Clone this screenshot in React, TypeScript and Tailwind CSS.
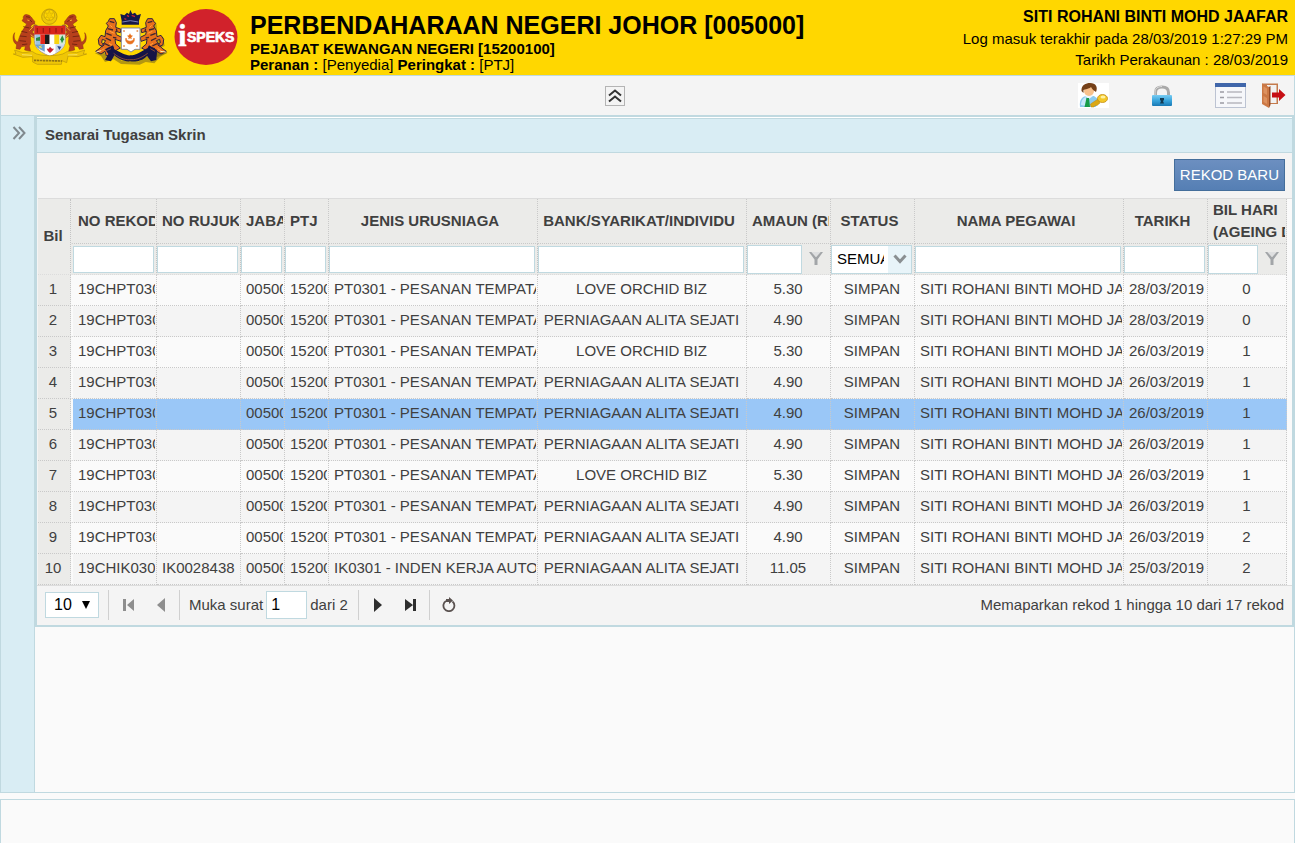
import React from "react";

const rows = [
  ["19CHPT030", "", "PT0301 - PESANAN TEMPATAN", "LOVE ORCHID BIZ", "5.30", "28/03/2019", "0"],
  ["19CHPT030", "", "PT0301 - PESANAN TEMPATAN", "PERNIAGAAN ALITA SEJATI", "4.90", "28/03/2019", "0"],
  ["19CHPT030", "", "PT0301 - PESANAN TEMPATAN", "LOVE ORCHID BIZ", "5.30", "26/03/2019", "1"],
  ["19CHPT030", "", "PT0301 - PESANAN TEMPATAN", "PERNIAGAAN ALITA SEJATI", "4.90", "26/03/2019", "1"],
  ["19CHPT030", "", "PT0301 - PESANAN TEMPATAN", "PERNIAGAAN ALITA SEJATI", "4.90", "26/03/2019", "1"],
  ["19CHPT030", "", "PT0301 - PESANAN TEMPATAN", "PERNIAGAAN ALITA SEJATI", "4.90", "26/03/2019", "1"],
  ["19CHPT030", "", "PT0301 - PESANAN TEMPATAN", "LOVE ORCHID BIZ", "5.30", "26/03/2019", "1"],
  ["19CHPT030", "", "PT0301 - PESANAN TEMPATAN", "PERNIAGAAN ALITA SEJATI", "4.90", "26/03/2019", "1"],
  ["19CHPT030", "", "PT0301 - PESANAN TEMPATAN", "PERNIAGAAN ALITA SEJATI", "4.90", "26/03/2019", "2"],
  ["19CHIK030", "IK0028438", "IK0301 - INDEN KERJA AUTO", "PERNIAGAAN ALITA SEJATI", "11.05", "25/03/2019", "2"],
];

function MalaysiaCrest() {
  const tiger = (
    <g>
      <path d="M106 64 C96 54 96 46 84 44 C76 42 70 48 72 56 L68 62 L76 68 L82 72 C78 82 70 88 66 98 C60 110 58 118 56 126 C46 124 42 112 46 98 C38 108 40 128 52 134 L50 146 L62 148 L66 140 L78 138 L76 150 L94 154 L90 138 C98 128 92 118 94 108 L108 116 L112 108 L98 96 L108 88 L114 76 L106 74 L96 84 C92 80 96 72 106 72 Z" fill="#b8401c" stroke="#8c3014" strokeWidth="1.5" />
      <path d="M80 50 L92 52 M72 80 L90 84 M66 94 L84 98 M62 108 L82 110 M60 122 L80 124 M68 134 L84 132 M92 60 L98 66" stroke="#6c2010" strokeWidth="2.5" fill="none" />
      <path d="M90 92 L102 80 M94 104 L104 112 M84 60 L90 62" stroke="#f0a830" strokeWidth="3" fill="none" />
    </g>
  );
  return (
    <svg viewBox="38 24 228 174" className="h-[58px] w-[76px]" role="img" aria-label="Jata Negara">
      <circle cx="150" cy="50" r="23" fill="#ecc808" stroke="#b8940c" strokeWidth="2.5" />
      <circle cx="150" cy="45" r="16" fill="#ffd700" stroke="#b8940c" strokeWidth="2" />
      <path d="M150 31 L153 40 L162 38 L156 46 L162 53 L153 52 L150 60 L147 52 L138 53 L144 46 L138 38 L147 40 Z" fill="#f4cc00" stroke="#b8940c" strokeWidth="1" />
      <g>{tiger}</g>
      <g transform="translate(302 0) scale(-1 1)">{tiger}</g>
      <path d="M105 78 H198 V122 C198 146 174 160 152 168 C128 160 105 146 105 122 Z" fill="#eef0f4" stroke="#98806c" strokeWidth="2" />
      <path d="M105 78 H198 V104 H105 Z" fill="#d8261c" />
      <path d="M114 84 V98 M132 84 V98 M151 84 V98 M170 84 V98 M188 84 V98" stroke="#a01814" strokeWidth="4" />
      <path d="M108 104 H122 V132 H108 Z" fill="#9cc4e4" />
      <path d="M110 114 L122 110 V122 H110 Z" fill="#2c8446" />
      <path d="M123 104 H137 V132 H123 Z" fill="#e0281c" />
      <path d="M137 104 H151 V132 H137 Z" fill="#1a1a1a" />
      <path d="M151 104 H165 V132 H151 Z" fill="#fff" />
      <path d="M165 104 H180 V132 H165 Z" fill="#f8d410" />
      <path d="M181 104 H197 V132 H181 Z" fill="#d4e8d4" />
      <path d="M189 106 L194 118 L188 130 L183 118 Z" fill="#24903c" />
      <path d="M108 133 H136 V155 C122 149 110 143 108 133 Z" fill="#6aa0d4" />
      <path d="M137 133 H168 V160 L152 167 L137 160 Z" fill="#fff" />
      <path d="M169 133 H196 C192 146 180 152 169 158 Z" fill="#cad8e8" />
      <path d="M118 138 L128 144 M120 146 L126 136" stroke="#f0e058" strokeWidth="3" />
      <path d="M152 140 L158 146 L164 146 L158 154 L152 159 L146 154 L142 146 L148 146 Z" fill="#c62030" />
      <path d="M174 138 L186 140 L180 150 Z" fill="#28458a" />
      <path d="M46 150 L70 158 C92 158 96 150 104 158 C120 170 182 170 198 158 C208 150 214 158 232 158 L256 150 L252 162 L262 162 L236 170 L206 168 L202 188 L188 182 L186 193 L114 193 L100 186 L100 170 L70 172 L42 162 L50 162 Z" fill="#efc606" stroke="#b8940c" strokeWidth="2" />
      <path d="M68 164 L98 166 M206 165 L234 164" stroke="#fff08a" strokeWidth="2" />
      <path d="M104 181 L188 183" stroke="#927410" strokeWidth="5" strokeDasharray="7 2" />
    </svg>
  );
}

function JohorCrest() {
  const beast = (
    <g>
      <path d="M366 86 L350 80 L352 66 L346 54 L332 54 L328 62 L322 68 L328 76 L320 90 L318 108 L306 104 L298 116 L300 132 L310 138 L316 132 L308 126 L310 116 L320 120 L304 142 L290 152 L306 160 L318 152 L322 166 L338 160 L336 146 L350 150 L364 142 L350 130 L348 116 L366 122 L368 110 L352 102 L350 92 L364 96 Z" fill="#e8701c" stroke="#302240" strokeWidth="3" />
      <path d="M332 62 L346 66 M326 84 L342 88 M322 98 L338 104 M320 112 L336 120 M316 128 L332 136 M324 144 L344 140 M354 92 L352 84 M342 110 L352 112" stroke="#3c2630" strokeWidth="4" />
      <path d="M334 74 L340 80 M332 92 L346 98 M330 128 L340 134 M306 150 L316 144" stroke="#ffa040" strokeWidth="3" />
    </g>
  );
  return (
    <svg viewBox="282 22 228 174" className="h-[58px] w-[76px]" role="img" aria-label="Jata Johor">
      <path d="M288 158 L312 148 L324 172 L350 162 L368 180 L420 182 L442 166 L462 180 L474 154 L506 156 L484 168 L466 188 L440 184 L422 192 L366 190 L344 176 L318 184 L306 166 Z" fill="#806c1c" opacity=".6" />
      <g transform="translate(3 4)" opacity=".35">
        <path d="M462 86 L440 80 L440 54 L460 54 L470 68 L472 108 L490 106 L494 132 L482 138 L502 152 L470 166 L430 142 Z" fill="#504010" />
      </g>
      <g>{beast}</g>
      <g transform="translate(792 0) scale(-1 1)">{beast}</g>
      <path d="M364 40 L376 44 L384 36 L390 40 L394 28 L400 40 L408 36 L414 44 L426 40 L420 60 V72 H368 V60 Z" fill="#151848" />
      <path d="M384 44 L390 48 M398 44 L408 48 M376 54 L382 56" stroke="#c22638" strokeWidth="4" />
      <path d="M370 64 Q394 56 418 64" stroke="#8c95cc" strokeWidth="2.5" fill="none" />
      <path d="M367 82 H423 V146 H408 L396 154 L384 146 H367 Z" fill="#fff" stroke="#70769a" strokeWidth="2.5" />
      <path d="M381 112 A13 13 0 1 0 405 112 A12 10 0 1 1 381 112 Z" fill="#e8701c" stroke="#e8701c" strokeWidth="2" />
      <path d="M393 98 L396 104 L402 105 L397 110 L398 116 L393 113 L388 116 L389 110 L384 105 L390 104 Z" fill="#e8701c" />
      <g fill="#e89a60">
        <circle cx="375" cy="91" r="3" /><circle cx="415" cy="91" r="3" /><circle cx="375" cy="136" r="3" /><circle cx="414" cy="136" r="3" />
      </g>
      <path d="M318 146 L342 134 L346 146 C366 156 382 166 395 164 C410 164 428 152 446 142 L450 134 L474 148 L472 178 L456 182 L444 166 C428 182 410 184 394 182 C374 184 358 174 346 164 L336 182 L318 178 L328 160 Z" fill="#151446" />
      <path d="M344 158 C366 176 382 178 396 177 C416 178 432 168 446 158 M322 150 L336 144 M454 144 L468 152" fill="none" stroke="#b86030" strokeWidth="2" />
      <path d="M292 154 L306 150 M484 152 L500 154" stroke="#fff0b0" strokeWidth="3" />
    </svg>
  );
}

function SpeksLogo() {
  return (
    <svg viewBox="0 0 64 58" className="h-[58px] w-16" role="img" aria-label="iSPEKS">
      <ellipse cx="32" cy="29" rx="31.5" ry="28" fill="#d1222b" />
      <text x="4" y="38" fill="#fff" stroke="#fff" strokeWidth=".4" fontFamily="Liberation Serif, serif" fontSize="31" fontWeight="bold">i</text>
      <text x="13" y="34" fill="#fff" stroke="#fff" strokeWidth=".7" fontFamily="Liberation Sans, sans-serif" fontSize="14" fontWeight="bold">SPEKS</text>
    </svg>
  );
}

function UserKeyIcon() {
  return (
    <svg viewBox="0 0 31 25" className="h-[25px] w-[31px]" aria-hidden="true">
      <rect width="31" height="25" fill="#fff" />
      <path d="M2 24 C1 17 4 13 9 13 L16 13 L20 16 L18 24 Z" fill="#8ccbee" />
      <path d="M3 22 C3 18 5 15 8 14 L8 23 Z" fill="#c8e8fa" />
      <path d="M7 13 L11 16 L15 13 L13 11 H9 Z" fill="#eef7fd" />
      <path d="M8.500 15 L11 15 L12 24 L6.500 24 Z" fill="#169c48" />
      <circle cx="11" cy="8" r="5" fill="#f8c18c" />
      <path d="M3.500 8 C3 2 8 0 12 0 C18 0 20 4 18 9 C16 8 14 6 13 4 C11 6 7 6 5.500 7 L5.500 10 Z" fill="#754018" />
      <path d="M20 16 L12.500 21 L13 24 L16 24 L17 22.500 L19 22.500 L22 20 Z" fill="#dca814" stroke="#b98610" strokeWidth=".5" />
      <ellipse cx="24.500" cy="15.500" rx="5" ry="4" fill="#f4c829" stroke="#c48d10" strokeWidth=".8" />
      <ellipse cx="25" cy="14" rx="2.500" ry="1.500" fill="#fff2a2" />
    </svg>
  );
}

function LockIcon() {
  return (
    <svg viewBox="0 0 22 22" className="h-[22px] w-[22px]" aria-hidden="true">
      <defs>
        <linearGradient id="lock-body" x1="0" y1="0" x2="0" y2="1">
          <stop offset="0" stopColor="#79ccf2" /><stop offset=".5" stopColor="#39a5dc" /><stop offset="1" stopColor="#1878b4" />
        </linearGradient>
      </defs>
      <path d="M4.500 11 V7.500 C4.500 3.500 7 2 11 2 C15 2 17.500 3.500 17.500 7.500 V11" fill="none" stroke="#a9a9a9" strokeWidth="3" />
      <path d="M4 10 V7 C4 3.500 7 1.500 11 1.500" fill="none" stroke="#dedede" strokeWidth="1" />
      <rect x="1" y="10" width="20" height="11" rx="1" fill="url(#lock-body)" />
      <path d="M9 13 H13 V15 L12 16 L13 18.500 H9 L10 16 L9 15 Z" fill="#123a52" />
    </svg>
  );
}

function ListIcon() {
  return (
    <svg viewBox="0 0 31 25" className="h-[25px] w-[31px]" aria-hidden="true">
      <rect x=".5" y=".5" width="30" height="24" fill="#f6f7fa" stroke="#bcc3d2" />
      <rect width="31" height="4" fill="#4066aa" />
      <path d="M5 9 H9 M5 14.500 H9 M5 20 H9" stroke="#9c9ca4" strokeWidth="1.500" />
      <path d="M12 9 H27 M12 14.500 H27 M12 20 H27" stroke="#b8b8bf" strokeWidth="1.500" />
    </svg>
  );
}

function ExitIcon() {
  return (
    <svg viewBox="0 0 25 25" className="h-[25px] w-[25px]" aria-hidden="true">
      <path d="M1 .5 H17 V21 H1 Z" fill="#c47a4c" />
      <path d="M6 2 H15.500 V20 H6 Z" fill="#f2f2f2" />
      <path d="M1 .5 L8 4 V25 L1 21 Z" fill="#cc7844" />
      <path d="M2.500 3.500 L6 5.500 V12 L2.500 10 Z M2.500 13 L6 15 V21 L2.500 19 Z" fill="#dd9260" />
      <path d="M8 4 L9.500 3 V22 L8 25 Z" fill="#934a25" />
      <path d="M11 9.500 H18 V6 L24.500 12 L18 18 V14.500 H11 Z" fill="#c60e14" />
    </svg>
  );
}

function Funnel() {
  return (
    <svg viewBox="0 0 16 16" className="h-4 w-4" aria-hidden="true">
      <path d="M1 1 H3.500 L8 6 L12.500 1 H15 L9.500 8.500 V14 L6.500 14 V8.500 Z" fill="#a2a5a8" />
      <path d="M3.500 1 H12.500 L8 6 Z" fill="#dedfe0" />
    </svg>
  );
}

const line = "border-r border-b border-dotted border-[#c9c9c9]";

function HeadCell({ children, first, left }: { children: React.ReactNode; first?: boolean; left?: boolean }) {
  return (
    <th scope="col" className={line + " p-0 pr-px font-bold" + (first ? " border-l-2 border-l-[#ebebe9] [border-left-style:solid]" : "")}>
      <div className={"overflow-hidden pl-[5px] leading-[22px] whitespace-nowrap " + (left ? "pr-0 text-left" : "pr-[10px] text-center")}>{children}</div>
    </th>
  );
}

function Cell({ children, first }: { children: React.ReactNode; first?: boolean }) {
  return (
    <td className={line + " p-0 pr-px pb-[2px]" + (first ? " border-l-2 border-l-[#fafafa] [border-left-style:solid]" : "")}>
      <div className="overflow-hidden px-[5px] text-center whitespace-nowrap">{children}</div>
    </td>
  );
}

function FilterInput({ label }: { label: string }) {
  return <input type="text" aria-label={label} className="block h-[27px] w-full border border-[#c0d9e0] bg-white px-1 outline-none" />;
}

function NumberFilter({ label }: { label: string }) {
  return (
    <div className="flex items-center">
      <input type="text" aria-label={label} className="block h-[29px] min-w-0 flex-1 border border-[#c0d9e0] bg-white px-1 outline-none" />
      <button type="button" aria-label={"Tapis " + label} className="flex w-7 shrink-0 justify-center">
        <Funnel />
      </button>
    </div>
  );
}

export default function App() {
  const fh = "border-r border-dotted border-[#c4c4c4] border-b border-b-[#dcdcdc] p-0 font-normal";
  return (
    <div className="flex min-h-screen flex-col bg-[#fafafa] font-['Liberation_Sans',Arial,sans-serif] text-[15px] leading-5 text-[#404040]">
      <header className="flex h-[75px] justify-between bg-[#ffd700] text-black">
        <div className="flex">
          <div className="flex items-start gap-[5px] pt-2 pl-3">
            <MalaysiaCrest />
            <JohorCrest />
            <SpeksLogo />
          </div>
          <div className="pt-3 pl-3 leading-4">
            <h1 className="mb-[3px] text-[25px] leading-[26px] font-bold">PERBENDAHARAAN NEGERI JOHOR [005000]</h1>
            <p className="font-bold">PEJABAT KEWANGAN NEGERI [15200100]</p>
            <p><b>Peranan :</b> [Penyedia] <b>Peringkat :</b> [PTJ]</p>
          </div>
        </div>
        <div className="pt-[6px] pr-[7px] text-right leading-[21px]">
          <p className="text-base leading-[22px] font-bold">SITI ROHANI BINTI MOHD JAAFAR</p>
          <p>Log masuk terakhir pada 28/03/2019 1:27:29 PM</p>
          <p>Tarikh Perakaunan : 28/03/2019</p>
        </div>
      </header>

      <nav className="grid h-10 grid-cols-[1fr_auto_1fr] items-center border-x border-t border-[#c0d9e0] bg-[#f4f4f4] pr-2">
        <span />
        <button type="button" aria-label="Tutup pengepala" className="mr-[58px] flex h-5 w-5 items-center justify-center border border-[#b4b4b4]">
          <svg viewBox="0 0 16 16" className="h-4 w-4" aria-hidden="true">
            <path d="M2 7.500 L8 2.500 L14 7.500 M2 13.500 L8 8.500 L14 13.500" fill="none" stroke="#333" strokeWidth="2" />
          </svg>
        </button>
        <div className="flex items-center justify-end">
          <button type="button" aria-label="Tukar kata laluan" className="mr-[42px]"><UserKeyIcon /></button>
          <button type="button" aria-label="Kunci" className="mr-[42px]"><LockIcon /></button>
          <button type="button" aria-label="Senarai" className="mr-[15px]"><ListIcon /></button>
          <button type="button" aria-label="Log keluar"><ExitIcon /></button>
        </div>
      </nav>

      <div className="flex flex-1 border border-[#c0d9e0] bg-[#fafafa]">
        <aside className="w-[34px] shrink-0 border-r border-[#c0d9e0] bg-[#d9edf4] pt-[9px] pl-[11px]">
          <button type="button" aria-label="Buka menu" className="block">
            <svg viewBox="0 0 14 16" className="h-4 w-[14px]" aria-hidden="true">
              <path d="M1.500 2 L7 8 L1.500 14 M7 2 L12.500 8 L7 14" fill="none" stroke="#80898e" strokeWidth="2" />
            </svg>
          </button>
        </aside>

        <main className="min-w-0 flex-1">
          <section className="border-2 border-t border-[#c0d9e0] bg-[#f4f4f4]">
            <h2 className="border-t border-white bg-[#d9edf4] font-bold">
              <span className="block h-[35px] border-y border-[#c0d9e0] px-2 leading-[31px]">Senarai Tugasan Skrin</span>
            </h2>
            <div className="flex h-[45px] items-start justify-end pt-[6px] pr-[7px]">
              <button type="button" className="h-8 border border-[#446e9b] bg-linear-to-b from-[#6c8fc0] to-[#557fb4] px-[5px] text-white">REKOD BARU</button>
            </div>

            <div className="ml-px border-t border-[#dcdcdc] bg-[#fafafa] pr-[5px]">
              <table className="w-full table-fixed border-separate border-spacing-0">
                <colgroup>
                  <col className="w-[33px]" />
                  <col className="w-[86px]" />
                  <col className="w-[84px]" />
                  <col className="w-[44px]" />
                  <col className="w-[44px]" />
                  <col />
                  <col />
                  <col className="w-[84px]" />
                  <col className="w-[84px]" />
                  <col />
                  <col className="w-[84px]" />
                  <col className="w-[79px]" />
                </colgroup>
                <thead className="bg-[#ebebe9]">
                  <tr className="h-[45px]">
                    <th rowSpan={2} scope="col" className="border-r border-b border-dotted border-[#c4c4c4] border-b-[#dcdcdc] p-0 pr-[2px] pb-[2px] text-center">Bil</th>
                    <HeadCell first>NO REKOD</HeadCell>
                    <HeadCell>NO RUJUKAN</HeadCell>
                    <HeadCell>JABATAN</HeadCell>
                    <HeadCell left>PTJ</HeadCell>
                    <HeadCell>JENIS URUSNIAGA</HeadCell>
                    <HeadCell>BANK/SYARIKAT/INDIVIDU</HeadCell>
                    <HeadCell>AMAUN (RM)</HeadCell>
                    <HeadCell>STATUS</HeadCell>
                    <HeadCell>NAMA PEGAWAI</HeadCell>
                    <HeadCell>TARIKH</HeadCell>
                    <HeadCell>BIL HARI<br />(AGEING DAY)</HeadCell>
                  </tr>
                  <tr className="h-[31px]">
                    <td className={fh + " border-l-2 border-l-[#ebebe9] pr-[2px]"}><FilterInput label="No rekod" /></td>
                    <td className={fh + " pr-[2px]"}><FilterInput label="No rujukan" /></td>
                    <td className={fh + " pr-[2px]"}><FilterInput label="Jabatan" /></td>
                    <td className={fh + " pr-[2px]"}><FilterInput label="PTJ" /></td>
                    <td className={fh + " pr-[2px]"}><FilterInput label="Jenis urusniaga" /></td>
                    <td className={fh + " pr-[2px]"}><FilterInput label="Bank, syarikat atau individu" /></td>
                    <td className={fh}><NumberFilter label="Amaun" /></td>
                    <td className={fh + " pr-[2px]"}>
                      <div className="relative">
                        <select aria-label="Status" className="block h-[29px] w-full appearance-none overflow-hidden border border-[#c0d9e0] bg-white pr-[27px] pl-[5px] text-black outline-none">
                          <option>SEMUA</option>
                        </select>
                        <span className="pointer-events-none absolute inset-y-px right-px flex w-[23px] items-center justify-center bg-[#e8f4f9]">
                          <svg viewBox="0 0 14 10" className="h-[10px] w-[14px]" aria-hidden="true">
                            <path d="M1.500 1.500 L7 7.500 L12.500 1.500" fill="none" stroke="#8a8f92" strokeWidth="3" />
                          </svg>
                        </span>
                      </div>
                    </td>
                    <td className={fh + " pr-[2px]"}><FilterInput label="Nama pegawai" /></td>
                    <td className={fh + " pr-[2px]"}><FilterInput label="Tarikh" /></td>
                    <td className={fh}><NumberFilter label="Bil hari" /></td>
                  </tr>
                </thead>
                <tbody>
                  {rows.map((r, i) => {
                    const bg = i === 4 ? "bg-[#9ac7f7]" : i % 2 ? "bg-[#f4f4f4]" : "bg-[#fafafa]";
                    return (
                      <tr key={i} className={"h-[31px] " + bg}>
                        <td className={line + " bg-[#ebebe9] p-0 pr-[2px] pb-[2px] text-center"}>{i + 1}</td>
                        <Cell first>{r[0]}</Cell>
                        <Cell>{r[1]}</Cell>
                        <Cell>00500</Cell>
                        <Cell>15200</Cell>
                        <Cell>{r[2]}</Cell>
                        <Cell>{r[3]}</Cell>
                        <Cell>{r[4]}</Cell>
                        <Cell>SIMPAN</Cell>
                        <Cell>SITI ROHANI BINTI MOHD JAAFAR</Cell>
                        <Cell>{r[5]}</Cell>
                        <Cell>{r[6]}</Cell>
                      </tr>
                    );
                  })}
                </tbody>
              </table>
            </div>

            <footer className="flex h-10 items-center border-t border-[#dcdcdc] pr-2 pb-[2px] pl-2">
              <div className="relative">
                <select aria-label="Rekod setiap halaman" className="block h-[26px] w-[54px] appearance-none border border-[#c0d9e0] bg-white pl-2 text-base leading-6 text-black outline-none">
                  <option>10</option>
                </select>
                <svg viewBox="0 0 8 8" className="pointer-events-none absolute top-[9px] right-[9px] h-2 w-2" aria-hidden="true">
                  <path d="M0 0 H8 L4 8 Z" fill="#000" />
                </svg>
              </div>
              <span className="ml-[9px] h-[30px] w-px bg-[#d0d0d0]" />
              <button type="button" aria-label="Halaman pertama" className="ml-[13px]">
                <svg viewBox="0 0 12 14" className="h-[14px] w-3" aria-hidden="true"><path d="M1 1 H4 V13 H1 Z M12 1 V13 L5 7 Z" fill="#8e8e8e" /></svg>
              </button>
              <button type="button" aria-label="Halaman sebelum" className="ml-[21px]">
                <svg viewBox="0 0 12 14" className="h-[14px] w-3" aria-hidden="true"><path d="M10 0 V14 L2 7 Z" fill="#8e8e8e" /></svg>
              </button>
              <span className="ml-3 h-[30px] w-px bg-[#d0d0d0]" />
              <label className="ml-[9px] flex items-center gap-[3px]">
                Muka surat
                <input type="text" defaultValue="1" className="h-7 w-[41px] border border-[#c0d9e0] bg-white px-1 text-base text-black outline-none" />
                dari 2
              </label>
              <span className="ml-[10px] h-[30px] w-px bg-[#d0d0d0]" />
              <button type="button" aria-label="Halaman seterusnya" className="ml-[13px]">
                <svg viewBox="0 0 12 14" className="h-[14px] w-3" aria-hidden="true"><path d="M2 0 V14 L10 7 Z" fill="#2e2e2e" /></svg>
              </button>
              <button type="button" aria-label="Halaman akhir" className="ml-[21px]">
                <svg viewBox="0 0 12 14" className="h-[14px] w-3" aria-hidden="true"><path d="M8 1 H11 V13 H8 Z M0 1 V13 L8 7 Z" fill="#2e2e2e" /></svg>
              </button>
              <span className="ml-3 h-[30px] w-px bg-[#d0d0d0]" />
              <button type="button" aria-label="Muat semula" className="ml-3">
                <svg viewBox="0 0 14 15" className="h-[15px] w-[14px]" aria-hidden="true">
                  <path d="M10.500 4.500 A5.500 5.500 0 1 1 4 4" fill="none" stroke="#5a5250" strokeWidth="1.800" />
                  <path d="M4 2 H7 V0 L11 3.500 L7 7 V5 H4 Z" fill="#5a5250" />
                </svg>
              </button>
              <p className="ml-auto">Memaparkan rekod 1 hingga 10 dari 17 rekod</p>
            </footer>
          </section>
        </main>
      </div>

      <div className="mt-[6px] h-11 border border-b-0 border-[#c0d9e0] bg-[#fafafa]" />
    </div>
  );
}
